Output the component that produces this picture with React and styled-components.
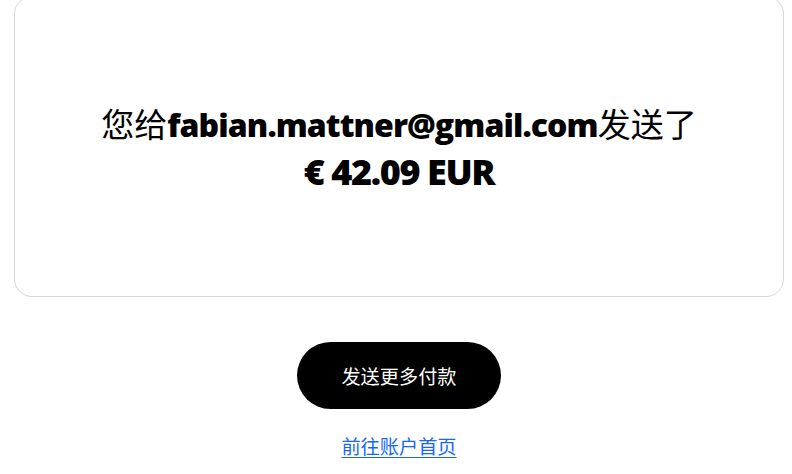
import React from 'react';
import styled, { createGlobalStyle } from 'styled-components';

const GlobalStyle = createGlobalStyle`
  html, body {
    margin: 0;
    padding: 0;
    background: #fff;
    overflow: hidden;
  }
  body {
    font-family: 'Open Sans', 'Noto Sans CJK SC', sans-serif;
    color: #000;
  }
`;

const Page = styled.div`
  padding: 0 8px 0 14px;
  display: flex;
  flex-direction: column;
  align-items: center;
`;

const Card = styled.section`
  align-self: stretch;
  margin-top: -4px;
  height: 301px;
  border: 1px solid #d6d6d6;
  border-radius: 18px;
  display: flex;
  align-items: center;
  justify-content: center;
  box-sizing: border-box;
`;

const Message = styled.h1`
  margin: 0;
  padding-top: 2px;
  text-align: center;
  font-size: 33px;
  line-height: 47px;
  font-weight: 400;
  font-family: 'Noto Sans CJK SC', sans-serif;
`;

const Strong = styled.span`
  font-family: 'Open Sans', 'Noto Sans CJK SC', sans-serif;
  font-weight: 800;
  font-size: ${(props) => props.$size || '32px'};
  letter-spacing: ${(props) => props.$spacing || '0'};
`;

const PrimaryButton = styled.button`
  margin-top: 45px;
  width: 204px;
  height: 67px;
  border: none;
  border-radius: 34px;
  background: #000;
  color: #fff;
  font-family: 'Noto Sans CJK SC', sans-serif;
  font-size: 19.2px;
  cursor: pointer;
`;

const HomeLink = styled.a`
  margin-top: 25px;
  color: #1769f5;
  font-family: 'Noto Sans CJK SC', sans-serif;
  font-size: 19.2px;
  line-height: 24px;
  text-decoration: underline;
  text-underline-offset: 3px;
  cursor: pointer;
`;

export default function App() {
  return (
    <>
      <GlobalStyle />
      <Page>
        <Card>
          <Message>
            您给<Strong $spacing="-0.9px">fabian.mattner@gmail.com</Strong>发送了
            <br />
            <Strong $size="36px" $spacing="-1.4px">€ 42.09 EUR</Strong>
          </Message>
        </Card>
        <PrimaryButton>发送更多付款</PrimaryButton>
        <HomeLink>前往账户首页</HomeLink>
      </Page>
    </>
  );
}
